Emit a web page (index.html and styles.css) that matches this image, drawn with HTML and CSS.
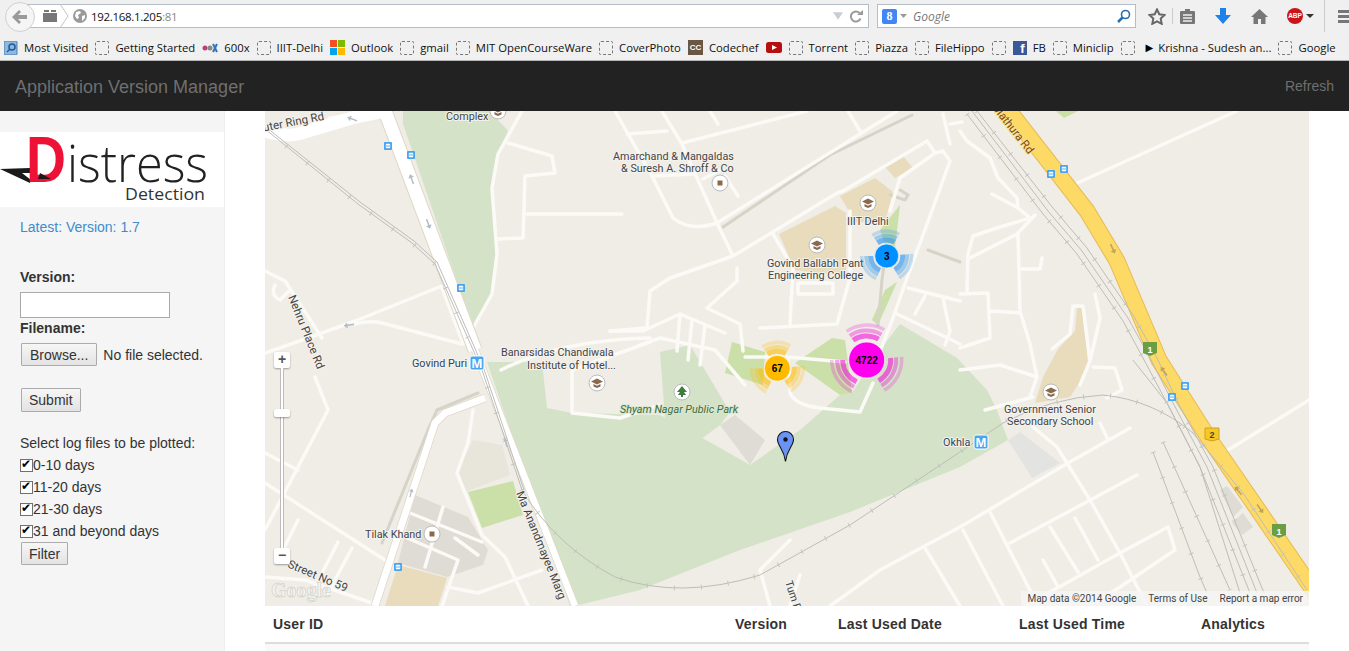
FILE: index.html
```html
<!DOCTYPE html>
<html lang="en">
<head>
  <meta charset="UTF-8" />
  <title>Application Version Manager</title>
  <link rel="stylesheet" href="styles.css">
</head>
<body>
  <div class="chrome">
    <div class="toolbar">
      <div class="back">
        <svg width="16" height="14" viewBox="0 0 16 14"><path class="ic-grey" d="M7 0l2 2-3 3h9v4H6l3 3-2 2-7-7z"/></svg>
      </div>
      <div class="urlbar">
        <svg class="tabs-ic" width="14" height="12" viewBox="0 0 14 12"><path class="ic-dark" d="M0 3h14v9H0zM1 0h5v2H1zM8 0h5v2H8z"/></svg>
        <svg class="chev" width="10" height="24" viewBox="0 0 10 24"><path class="ic-line" d="M1 0l8 12-8 12"/></svg>
        <svg class="globe" width="14" height="14" viewBox="0 0 14 14"><circle class="ic-grey" cx="7" cy="7" r="7"/><path class="ic-white" d="M3 3l4-1 1 2-3 2 1 3-2 1-2-3zM9 7l3-1 0 3-3 3z"/></svg>
        <span class="url">192.168.1.205<span class="port">:81</span></span>
        <svg class="drop" width="10" height="8" viewBox="0 0 12 9"><path class="ic-pale" d="M0 0h12L6 9z"/></svg>
        <svg class="reload" width="13" height="13" viewBox="0 0 13 13"><path class="ic-stroke" d="M10.500 8.500A5 5 0 1 1 9.500 3"/><path class="ic-grey" d="M7 5h6V0z"/></svg>
      </div>
      <div class="searchbar">
        <span class="g-ic">8</span>
        <svg class="caret" width="7" height="4" viewBox="0 0 7 4"><path class="ic-grey" d="M0 0h7L3.500 4z"/></svg>
        <span class="engine">Google</span>
        <svg class="mag" width="14" height="14" viewBox="0 0 14 14"><circle class="ic-blue-line" cx="8.500" cy="5.500" r="4"/><path class="ic-blue-line thick" d="M5.500 8.500L1 13"/></svg>
      </div>
      <div class="tool-icons">
        <svg width="18" height="17" viewBox="0 0 18 17"><path class="ic-star" d="M9 1.500l2.300 4.800 5.200.7-3.800 3.600 1 5.200L9 13.300l-4.700 2.500 1-5.200L1.500 7l5.200-.7z"/></svg>
        <i class="tool-sep"></i>
        <svg class="ic-clip" width="15" height="15" viewBox="0 0 15 15"><path class="ic-dark" d="M1 2h4V0h5v2h4q1 0 1 1v11q0 1-1 1H1q-1 0-1-1V3q0-1 1-1z"/><path class="ic-gap" d="M3 6h9M3 9h9M3 12h9"/></svg>
        <svg class="ic-down" width="16" height="16" viewBox="0 0 16 16"><path class="ic-blue" d="M5 0h6v7h5l-8 9-8-9h5z"/></svg>
        <svg class="ic-home" width="17" height="15" viewBox="0 0 17 15"><path class="ic-dark" d="M8.500 0L17 8h-2.500v7H10v-5H7v5H2.500V8H0z"/></svg>
        <span class="abp">ABP</span>
        <svg class="ic-abp-caret" width="8" height="4" viewBox="0 0 8 4"><path class="ic-near-black" d="M0 0h8L4 4z"/></svg>
        <i class="tool-sep tall"></i>
        <svg class="ic-menu" width="14" height="13" viewBox="0 0 14 13"><path class="ic-dark" d="M0 0h14v3H0zM0 5h14v3H0zM0 10h14v3H0z"/></svg>
      </div>
    </div>
    <div class="bookmarks">
      <a class="bm"><svg class="bm-ic" width="14" height="14" viewBox="0 0 14 14"><rect class="mv-bg" width="13" height="14" rx="1"/><circle class="mv-lens" cx="8" cy="6" r="3"/><path class="mv-lens" d="M6 8l-3 3"/></svg>Most Visited</a>
      <a class="bm"><i class="dash"></i>Getting Started</a>
      <a class="bm"><svg class="bm-ic" width="16" height="10" viewBox="0 0 16 10"><circle class="edx-a" cx="3" cy="5" r="2.500"/><circle class="edx-b" cx="8" cy="5" r="2.500"/><path class="edx-c" d="M11 1l4 8M15 1l-4 8"/></svg>600x</a>
      <a class="bm"><i class="dash"></i>IIIT-Delhi</a>
      <a class="bm"><span class="win"><i class="w1"></i><i class="w2"></i><i class="w3"></i><i class="w4"></i></span>Outlook</a>
      <a class="bm"><i class="dash"></i>gmail</a>
      <a class="bm"><i class="dash"></i>MIT OpenCourseWare</a>
      <a class="bm"><i class="dash"></i>CoverPhoto</a>
      <a class="bm"><span class="cc">CC</span>Codechef</a>
      <a class="bm"><svg class="bm-ic" width="16" height="11" viewBox="0 0 16 11"><rect class="yt" width="16" height="11" rx="2.500"/><path class="ic-white" d="M6 3l5 2.500L6 8z"/></svg></a>
      <a class="bm"><i class="dash"></i>Torrent</a>
      <a class="bm"><i class="dash"></i>Piazza</a>
      <a class="bm"><i class="dash"></i>FileHippo</a>
      <a class="bm"><i class="dash"></i></a>
      <a class="bm"><span class="fb">f</span>FB</a>
      <a class="bm"><i class="dash"></i>Miniclip</a>
      <a class="bm"><i class="dash"></i><span class="play">▶</span>Krishna - Sudesh an...</a>
      <a class="bm"><i class="dash"></i>Google</a>
    </div>
  </div>

  <nav class="navbar">
    <span class="brand">Application Version Manager</span>
    <a class="refresh">Refresh</a>
  </nav>

  <div class="page">
    <aside class="sidebar">
      <div class="logo">
        <svg width="224" height="75" viewBox="0 0 224 75">
          <path class="logo-wing" d="M0 37l30-1 0 5-8 0 9 7-1 3z"/>
          <text class="logo-d" x="26" y="50" textLength="40" lengthAdjust="spacingAndGlyphs">D</text>
          <path class="logo-notch" d="M40 41l11 6-13 0z"/>
          <text class="logo-word" x="67" y="50" textLength="141" lengthAdjust="spacingAndGlyphs">istress</text>
          <text class="logo-sub" x="125" y="68" textLength="80" lengthAdjust="spacingAndGlyphs">Detection</text>
        </svg>
      </div>
      <p class="latest">Latest: Version: 1.7</p>
      <form class="upload">
        <label class="lbl lbl-version">Version:</label>
        <input class="text-in" type="text">
        <label class="lbl">Filename:</label>
        <div class="file-row">
          <button type="button" class="btn btn-browse">Browse...</button>
          <span>No file selected.</span>
        </div>
        <button type="button" class="btn btn-submit">Submit</button>
      </form>
      <div class="filters">
        <p class="filters-title">Select log files to be plotted:</p>
        <label class="chk"><input type="checkbox" checked>0-10 days</label>
        <label class="chk"><input type="checkbox" checked>11-20 days</label>
        <label class="chk"><input type="checkbox" checked>21-30 days</label>
        <label class="chk"><input type="checkbox" checked>31 and beyond days</label>
        <button type="button" class="btn btn-filter">Filter</button>
      </div>
    </aside>

    <main class="content">
      <div class="map">
        <svg class="map-svg" width="1044" height="495" viewBox="265 111 1044 495">
          <defs>
            <symbol id="school" viewBox="0 0 18 18">
              <circle class="poi-bg" cx="9" cy="9" r="8"/>
              <path class="poi-brown" d="M9 4.500L15 7.500 9 10.500 3 7.500zM5.500 10l3.500 1.700 3.500-1.700v2.500L9 14l-3.500-1.500z"/>
            </symbol>
            <symbol id="square" viewBox="0 0 18 18">
              <circle class="poi-bg" cx="9" cy="9" r="8"/>
              <rect class="poi-brown" x="6.500" y="6.500" width="5" height="5"/>
            </symbol>
            <symbol id="metro" viewBox="0 0 16 16">
              <rect class="metro-bg" x="1" y="1" width="14" height="14" rx="2"/>
              <text class="metro-m" x="8" y="13" text-anchor="middle">M</text>
            </symbol>
            <symbol id="bus" viewBox="0 0 9 9">
              <rect class="bus-bg" width="9" height="9" rx="1"/>
              <rect class="bus-in" x="2" y="2" width="5" height="5" rx="1"/>
              <rect class="bus-bg" x="2" y="4" width="5" height="1"/>
            </symbol>
            <symbol id="arrow" viewBox="0 0 8 14">
              <path d="M4 0l4 5H5v9H3V5H0z"/>
            </symbol>
          </defs>

          <rect class="land" x="265" y="111" width="1044" height="495"/>

          <!-- parks and areas -->
          <path class="park" d="M403 111L490 111 508 131 498 154 492 188 497 254 492 294 473 328 403 124z"/>
          <path class="park" d="M487 362L542 362 547 408 572 413 660 415 715 445 750 465 800 430 840 395 852 393 880 350 900 324 957 358 987 390 997 410 1008 440 960 467 850 512 740 550 640 590 575 606 570 606z"/>
          <path class="park" d="M660 352L690 345 730 412 720 425 700 440 665 418z"/>
          <path class="park-mid" d="M732 342L765 352 763 385 725 373z"/>
          <path class="park-mid" d="M795 363L832 338 845 340 852 393 840 395z"/>
          <path class="park-mid" d="M468 492L513 481 523 515 482 528z"/>
          <path class="park-mid" d="M880 230L900 205 895 248 885 245z"/>
          <path class="park-mid" d="M885 290L897 282 878 325 872 320z"/>
          <path class="park-mid" d="M1056 111L1078 111 1064 118z"/>
          <path class="bld" d="M720 425L735 415 765 440 750 465z"/>
          <path class="sand" d="M779 234L835 206 846 213 846 276 795 270z"/>
          <path class="sand" d="M840 196L875 178 893 192 885 222 855 222z"/>
          <path class="sand" d="M885 167L902 155 913 168 895 178z"/>
          <path class="sand" d="M1058 349L1075 331 1077 308 1082 308 1088 361 1083 377 1070 397 1035 403 1043 377z"/>
          <path class="sand" d="M398 565L447 578 438 606 385 606z"/>
          <path class="bld" d="M415 495L468 517 488 550 483 565 447 577 398 563z"/>
          <path class="bld-light" d="M473 440L502 445 510 475 465 492 457 473z"/>
          <path class="bld-grey" d="M1008 440L1020 432 1060 463 1032 478z"/>
          <path class="bld" d="M1220 490L1227 486 1243 507 1233 517z"/>
          <path class="bld" d="M1232 523L1243 513 1253 527 1242 535z"/>

          <!-- grey service roads -->
          <path class="r-grey" d="M478 393L437 410 428 430 382 543"/>
          <path class="r-grey" d="M723 227L830 155 912 115"/>
          <path class="r-grey" d="M878 325L882 280 886 250"/>
          <path class="r-grey" d="M928 250L960 262M900 190L908 195 905 200 890 195"/>

          <!-- minor roads -->
          <g class="r">
            <path d="M522 111L498 154 492 188 497 254 492 294 473 328"/>
            <path d="M508 143L552 156 555 173 525 176 523 238 497 239M527 214H622"/>
            <path d="M442 286L355 321 308 338 265 353M355 324Q370 320 382 323L462 344 468 343M442 288L462 341"/>
            <path d="M265 271L285 281 322 338M275 285Q270 295 280 300L290 290"/>
            <path d="M315 377L328 410 265 530M265 453L298 470M265 483L385 560M298 520L278 560M338 542L315 587M352 548L328 593M265 577L305 580 372 603"/>
            <path d="M473 410L468 443 457 473 482 535 505 557 522 593 528 606"/>
            <path d="M410 513L482 542M443 507L425 567M405 537L458 560 442 606M455 538L478 555M448 587L478 593 542 570"/>
            <path d="M615 111L653 178 673 218Q690 232 717 223L897 111M717 223L733 256M627 134L667 131M662 111L682 144 717 223M682 143L807 111M848 111L860 131M653 176L693 174M703 179L720 170M725 176L738 196M710 111L718 124"/>
            <path d="M610 331L647 328 650 291 670 278 733 256 837 193 843 191 927 141 935 153 900 178 890 211M935 153L943 151 950 161 933 208 907 278 893 318 880 351"/>
            <path d="M773 234L793 268 790 324M850 211L850 278 837 324 760 328M798 283H833V294H798zM737 268V281L707 308 740 324 743 351"/>
            <path d="M610 331L643 331 680 314 725 333M680 314L677 351M692 320L688 360M705 325L700 365M640 345L660 338 715 350 745 385"/>
            <path d="M745 357L788 357 845 362M788 357L790 393Q795 405 820 408L860 412 873 383M572 413V370L650 342M572 413L620 418 660 405"/>
            <path d="M501 370Q560 340 650 338"/>
            <path d="M908 288L960 301M897 314L960 344M925 296L915 314M943 298L950 331 945 345M943 114L950 144M950 124L962 122"/>
            <path d="M960 131L967 141 990 158 998 178 1017 198 1018 208 1030 218M992 194L1018 208M1035 215L1017 234 970 258M1030 218L997 228 973 236 968 254 967 291M960 294L988 293 990 338 960 348M990 311L1020 313M1018 234L1020 311 1030 344 1037 377M1022 269H1040L1042 258"/>
            <path d="M1052 349L1070 334 1073 306H1083L1090 361 1080 385M1095 294L1100 318 1090 361"/>
            <path d="M960 370L1000 365 1037 377 1030 397M1093 367L1115 368 1122 390 1107 398M985 410L1033 397"/>
            <path d="M960 527L1068 463 1130 428M1010 543L1137 475M1033 427L1057 447 1090 500 1120 553 1147 606M1100 423L1108 440M990 512L1038 606M963 530L1003 606M1050 527L1078 572M1075 518L1098 560M1043 560L1058 587M1027 605L1120 553 1168 527 1175 550 1120 587 1090 606M960 527L880 570 830 606M925 548L960 606"/>
            <path d="M1075 184L1237 111M1228 450L1309 400"/>
            <path d="M770 606L760 570 790 540M790 606L800 575"/>
            <path d="M385 111L330 118"/>
          </g>

          <!-- main white roads -->
          <path class="casing-w" d="M385 111L475 350"/>
          <path class="casing-n" d="M475 350L575 606"/>
          <path class="casing-t" d="M485 398L445 413 435 423 375 606"/>
          <path class="main-w" d="M265 131Q285 137 298 134L352 118 385 111"/>
          <path class="main-w" d="M385 111L475 350"/>
          <path class="main-n" d="M475 350L575 606"/>
          <path class="main-t" d="M485 398L445 413 435 423 375 606"/>

          <!-- Mathura Rd -->
          <path class="hwy-case" d="M1003 103L1087 211 1117 261 1159 360 1208 437 1320 600"/>
          <path class="hwy" d="M1003 103L1087 211 1117 261 1159 360 1208 437 1320 600"/>

          <!-- railways -->
          <g class="rail">
            <path d="M265 129L358 204 412 243 435 264 482 370 522 490"/>
            <path d="M267 128L360 202 414 241 437 262 484 369 524 490"/>
            <path d="M522 490Q555 545 615 577Q680 600 760 575L850 525 960 452 1003 423Q1050 398 1103 395 1153 400 1193 433L1243 493 1307 590"/>
            <path d="M967 114L1043 214 1077 254 1123 321 1143 358 1167 403 1200 467 1250 593"/>
            <path d="M972 111L1048 211 1082 251 1128 318 1150 358 1173 403 1207 467 1257 593"/>
            <path d="M977 111L1053 208 1087 248 1133 315 1157 358 1178 403 1213 467 1264 593"/>
            <path d="M1133 360L1167 403 1200 467 1240 593"/>
            <path d="M1153 452L1200 577 1207 593M1163 442L1230 590"/>
          </g>
          <g class="rail-ticks">
            <path d="M265 129L358 204 412 243 435 264 482 370 522 490"/>
            <path d="M522 490Q555 545 615 577Q680 600 760 575L850 525 960 452 1003 423Q1050 398 1103 395 1153 400 1193 433L1243 493 1307 590"/>
            <path d="M967 114L1043 214 1077 254 1123 321 1143 358 1167 403 1200 467 1250 593"/>
            <path d="M977 111L1053 208 1087 248 1133 315 1157 358 1178 403 1213 467 1264 593"/>
            <path d="M1153 452L1200 577 1207 593M1163 442L1230 590"/>
          </g>

          <!-- road direction arrows -->
          <use class="arr" href="#arrow" x="0" y="0" width="6" height="11" transform="translate(407 175) rotate(-20)"/>
          <use class="arr" href="#arrow" x="0" y="0" width="6" height="11" transform="translate(433 228) rotate(160)"/>
          <use class="arr" href="#arrow" x="0" y="0" width="6" height="11" transform="translate(402 112) rotate(185)"/>
          <use class="arr" href="#arrow" x="0" y="0" width="6" height="11" transform="translate(346 120) rotate(-70)"/>
          <use class="arr" href="#arrow" x="0" y="0" width="6" height="11" transform="translate(344 329) rotate(-100)"/>
          <use class="arr" href="#arrow" x="0" y="0" width="5" height="11" transform="translate(410 487) rotate(15)"/>
          <use class="arr" href="#arrow" x="0" y="0" width="5" height="11" transform="translate(502 438) rotate(-15)"/>
          <use class="arr-y" href="#arrow" x="0" y="0" width="6" height="12" transform="translate(1118 253) rotate(155)"/>
          <use class="arr-y" href="#arrow" x="0" y="0" width="6" height="12" transform="translate(1158 368) rotate(-35)"/>
          <use class="arr-y" href="#arrow" x="0" y="0" width="6" height="12" transform="translate(1232 488) rotate(-40)"/>
          <use class="arr-y" href="#arrow" x="0" y="0" width="6" height="12" transform="translate(1266 512) rotate(145)"/>

          <!-- poi icons -->
          <use href="#school" x="489" y="102" width="18" height="18"/>
          <use href="#square" x="711" y="174" width="18" height="18"/>
          <use href="#school" x="859" y="194" width="18" height="18"/>
          <use href="#school" x="808" y="236" width="18" height="18"/>
          <use href="#school" x="588" y="374" width="18" height="18"/>
          <use href="#square" x="423" y="525" width="18" height="18"/>
          <use href="#school" x="1042" y="383" width="18" height="18"/>
          <circle class="poi-bg" cx="682" cy="392" r="8"/>
          <path class="tree" d="M682 386l5 6h-3l2 3h-8l2-3h-3zM681 395h2v2h-2z"/>
          <use href="#metro" x="469" y="355" width="16" height="16"/>
          <use href="#metro" x="973" y="434" width="16" height="16"/>
          <use href="#bus" x="384" y="142" width="8" height="8"/>
          <use href="#bus" x="407" y="151" width="8" height="8"/>
          <use href="#bus" x="457" y="284" width="8" height="8"/>
          <use href="#bus" x="394" y="563" width="8" height="8"/>
          <use href="#bus" x="1047" y="170" width="8" height="8"/>
          <use href="#bus" x="1060" y="165" width="8" height="8"/>
          <use href="#bus" x="1168" y="393" width="8" height="8"/>
          <use href="#bus" x="1181" y="382" width="8" height="8"/>

          <!-- shields -->
          <path class="shield-g" d="M1143 342H1157V353L1150 356 1143 353z"/>
          <text class="shield-t" x="1150" y="353">1</text>
          <path class="shield-g" d="M1272 524H1286V535L1279 538 1272 535z"/>
          <text class="shield-t" x="1279" y="535">1</text>
          <path class="shield-y" d="M1205 428H1219V439L1212 441 1205 439z"/>
          <text class="shield-t dark" x="1212" y="438">2</text>

          <!-- labels -->
          <g class="lab">
            <text x="446" y="120">Complex</text>
            <text x="613" y="160">Amarchand &amp; Mangaldas</text>
            <text x="621" y="172">&amp; Suresh A. Shroff &amp; Co</text>
            <text x="847" y="225">IIIT Delhi</text>
            <text x="767" y="267">Govind Ballabh Pant</text>
            <text x="768" y="279">Engineering College</text>
            <text x="501" y="356">Banarsidas Chandiwala</text>
            <text x="527" y="369">Institute of Hotel...</text>
            <text class="lab-metro" x="412" y="367">Govind Puri</text>
            <text x="365" y="538">Tilak Khand</text>
            <text class="lab-metro" x="943" y="446">Okhla</text>
            <text x="1004" y="413">Government Senior</text>
            <text x="1007" y="425">Secondary School</text>
            <text class="lab-road" transform="translate(256 133) rotate(-11)">Outer Ring Rd</text>
            <text class="lab-road" transform="translate(288 297) rotate(68)">Nehru Place Rd</text>
            <text class="lab-road" transform="translate(287 567) rotate(23)">Street No 59</text>
            <text class="lab-road" transform="translate(516 493) rotate(68)">Ma Anandmayee Marg</text>
            <text transform="translate(785 582) rotate(72)">Tum P</text>
            <text class="lab-park" x="620" y="413">Shyam Nagar Public Park</text>
            <text class="lab-hwy" transform="translate(992 108) rotate(52)">Mathura Rd</text>
          </g>
          <text class="gmark" x="271" y="597">Google</text>

          <!-- clusters -->
          <g class="cluster c-yellow">
            <circle class="a1" cx="777.300" cy="368.300" r="17" pathLength="360"/>
            <circle class="a2" cx="777.300" cy="368.300" r="21.500" pathLength="360"/>
            <circle class="a3" cx="777.300" cy="368.300" r="26" pathLength="360"/>
            <circle class="core" cx="777.300" cy="368.300" r="13"/>
            <text x="777.300" y="372">67</text>
          </g>
          <g class="cluster c-pink">
            <circle class="a1" cx="866.700" cy="360" r="24" pathLength="360"/>
            <circle class="a2" cx="866.700" cy="360" r="29.500" pathLength="360"/>
            <circle class="a3" cx="866.700" cy="360" r="35" pathLength="360"/>
            <circle class="core" cx="866.700" cy="360" r="18"/>
            <text x="866.700" y="364">4722</text>
          </g>
          <g class="cluster c-blue">
            <circle class="a1" cx="886.700" cy="256" r="16" pathLength="360"/>
            <circle class="a2" cx="886.700" cy="256" r="20.500" pathLength="360"/>
            <circle class="a3" cx="886.700" cy="256" r="25" pathLength="360"/>
            <circle class="core" cx="886.700" cy="256" r="12"/>
            <text x="886.700" y="260">3</text>
          </g>

          <!-- pin -->
          <path class="pin" d="M785.500 431.500C781 431.500 777.500 435 777.500 439.500 777.500 446 784 449 785.500 461.500 787 449 793.500 446 793.500 439.500 793.500 435 790 431.500 785.500 431.500z"/>
          <circle class="pin-dot" cx="785.500" cy="439.500" r="2.200"/>
        </svg>

        <div class="zoom-ctl">
          <span class="zoom-btn">+</span>
          <span class="zoom-track"><i class="zoom-thumb"></i></span>
          <span class="zoom-btn">−</span>
        </div>
        <div class="attrib">
          <span>Map data ©2014 Google</span>
          <span>Terms of Use</span>
          <span>Report a map error</span>
        </div>
      </div>

      <table class="users">
        <colgroup>
          <col class="c1"><col class="c2"><col class="c3"><col class="c4"><col class="c5">
        </colgroup>
        <thead>
          <tr><th>User ID</th><th>Version</th><th>Last Used Date</th><th>Last Used Time</th><th>Analytics</th></tr>
        </thead>
        <tbody>
          <tr><td colspan="5"></td></tr>
        </tbody>
      </table>
    </main>
  </div>
</body>
</html>
```
FILE: styles.css
```css
* { box-sizing: border-box; }
html, body { margin: 0; height: 100%; overflow: hidden; }
body {
  display: flex;
  flex-direction: column;
  font-family: "Liberation Sans", sans-serif;
  font-size: 14px;
  color: #333;
  background: #fff;
}
p { margin: 0; }

/* browser chrome */
.chrome { height: 61px; flex: none; background: #f0f0f0; border-bottom: 1px solid #b5b5b5; font-family: "Open Sans", sans-serif; }
.toolbar { height: 35px; display: flex; align-items: flex-start; padding: 4px 0 0 5px; position: relative; }
.back {
  position: absolute; left: 5px; top: 2px; z-index: 1;
  width: 30px; height: 30px; border-radius: 50%;
  background: #f5f5f5; border: 1px solid #d0d0d0;
  display: flex; align-items: center; justify-content: center;
}
.urlbar {
  margin-left: 14px; width: 850px; height: 24px;
  background: #fff; border: 1px solid #b4bec9;
  display: flex; align-items: center; padding-left: 22px;
}
.tabs-ic { margin-left: 1px; }
.chev { margin-left: 2px; }
.globe { margin-left: 4px; }
.url { margin-left: 4px; font-size: 11.500px; color: #111; letter-spacing: -.3px; }
.port { color: #888; }
.drop { margin-left: auto; }
.reload { margin: 0 5px 0 7px; }
.searchbar {
  margin-left: 8px; width: 259px; height: 24px;
  background: #fff; border: 1px solid #b4bec9;
  display: flex; align-items: center; padding-left: 4px;
}
.g-ic {
  width: 15px; height: 15px; border-radius: 2px; background: #4285f4;
  color: #fff; font: bold 12px/15px "Liberation Serif", serif; text-align: center;
}
.caret { margin-left: 3px; }
.engine { margin-left: 6px; font-size: 12px; font-style: italic; color: #777; }
.mag { margin-left: auto; margin-right: 4px; }
.tool-icons { position: absolute; left: 1148px; top: 0; height: 32px; display: flex; align-items: center; }
.tool-sep { width: 1px; height: 16px; margin-left: 6px; background: #ccc; }
.tool-sep.tall { height: 32px; margin-left: 10px; }
.ic-clip { margin-left: 7px; }
.ic-down { margin-left: 20px; }
.ic-home { margin-left: 20px; }
.abp {
  margin-left: 19px; width: 16px; height: 16px; border-radius: 50%;
  background: #c8141c; color: #fff; font: bold 6.500px/16px "Liberation Sans", sans-serif; text-align: center;
}
.ic-abp-caret { margin-left: 3px; }
.ic-menu { margin-left: 13px; }
.ic-grey { fill: #9a9a9a; }
.ic-dark { fill: #777; }
.ic-near-black { fill: #333; }
.ic-white { fill: #fff; }
.ic-pale { fill: #c9ced4; }
.ic-blue { fill: #1e82e8; }
.ic-gap { stroke: #f0f0f0; stroke-width: 1.500; fill: none; }
.ic-line { stroke: #c4c4c4; fill: none; }
.ic-stroke { stroke: #9a9a9a; stroke-width: 2; fill: none; }
.ic-star { fill: none; stroke: #666; stroke-width: 2; }
.ic-blue-line { fill: none; stroke: #2a6eb0; stroke-width: 1.600; }
.ic-blue-line.thick { stroke-width: 2.500; }

.bookmarks {
  height: 25px; display: flex; align-items: center; gap: 7px; padding: 0 0 0 4px;
  font-size: 11.300px; color: #111; white-space: nowrap;
}
.bm { display: flex; align-items: center; gap: 6px; }
.bm-ic { flex: none; }
.dash { width: 14px; height: 14px; border: 1px dashed #777; border-radius: 2px; flex: none; }
.mv-bg { fill: #8db8e0; stroke: #4c7fb0; }
.mv-lens { fill: none; stroke: #235b94; stroke-width: 1.500; }
.edx-a { fill: #b3447a; }
.edx-b { fill: #888; }
.edx-c { stroke: #2f74c0; stroke-width: 2; fill: none; }
.win { width: 15px; height: 15px; display: grid; grid-template-columns: 1fr 1fr; gap: 1px; }
.win .w1 { background: #f25022; }
.win .w2 { background: #7fba00; }
.win .w3 { background: #00a4ef; }
.win .w4 { background: #ffb900; }
.cc { width: 15px; height: 15px; background: #6b5644; color: #fff; font: bold 8px/15px "Liberation Sans", sans-serif; text-align: center; }
.yt { fill: #b5100f; }
.fb { width: 14px; height: 14px; background: #3b5998; color: #fff; font: bold 13px/15px "Liberation Sans", sans-serif; text-align: right; padding-right: 2px; }
.play { color: #000; font-size: 10px; margin: 0 -1px 0 5px; font-family: "DejaVu Sans", sans-serif; }

/* navbar */
.navbar {
  height: 50px; flex: none; background: #222;
  display: flex; align-items: center; justify-content: space-between;
  padding: 0 15px;
  color: #6f6f6f;
}
.brand { font-size: 18px; padding-top: 2px; }
.refresh { font-size: 14px; }

/* page */
.page { flex: 1; display: flex; min-height: 0; }
.sidebar {
  width: 225px; flex: none;
  background: #f5f5f5; border-right: 1px solid #eee;
  padding-top: 21px;
}
.logo { height: 75px; background: #fff; }
.logo svg { display: block; overflow: visible; }
.logo-wing { fill: #1a1a1a; }
.logo-d { font: bold 64px "Liberation Sans", sans-serif; fill: #ee1236; }
.logo-notch { fill: #1a1a1a; }
.logo-word { font: 300 52px "Open Sans", sans-serif; fill: #222; }
.logo-sub { font: 400 17px "Open Sans", sans-serif; fill: #333; }

.latest { margin: 12px 0 0 20px; color: #428bca; line-height: 16px; }
.upload { padding-left: 20px; }
.lbl { display: block; font-weight: bold; line-height: 20px; }
.lbl-version { margin-top: 32px; }
.text-in {
  display: block; width: 150px; height: 26px; margin-top: 5px;
  background: #fff; border: 1px solid #a9a9a9;
}
.file-row { display: flex; align-items: center; gap: 6px; margin-top: 5px; padding-left: 1px; }
.btn {
  height: 23px; padding: 0 7px;
  font: 14px "Liberation Sans", sans-serif; color: #333;
  background: linear-gradient(#f6f6f6, #e3e3e3);
  border: 1px solid #ababab; border-radius: 1px;
}
.btn-browse { padding: 0 8px; }
.btn-submit { display: block; height: 24px; margin: 22px 0 0 1px; }
.filters { padding-left: 20px; margin-top: 21px; }
.filters-title { line-height: 21px; }
.chk { display: flex; align-items: center; height: 22px; }
.chk input {
  appearance: none; -webkit-appearance: none;
  width: 13px; height: 13px; margin: 0; position: relative;
  background: #fff; border: 1px solid #707070;
}
.chk input::after {
  content: "✔"; position: absolute; left: 0; top: -3px;
  font: 12px/14px "DejaVu Sans", sans-serif; color: #000;
}
.btn-filter { display: block; margin: 0 0 0 1px; }

.content { flex: 1; padding: 0 40px; min-width: 0; }
.map { position: relative; height: 495px; overflow: hidden; }
.map-svg { display: block; }

/* map drawing */
.land { fill: #efede5; }
.park { fill: #d4e3c8; }
.park-mid { fill: #cbdfa9; }
.bld { fill: #dfdbd5; }
.bld-light { fill: #e8e5da; }
.bld-grey { fill: #e3e3e2; }
.sand { fill: #e8dcbd; }
.r path { fill: none; stroke: #fbfaf7; stroke-width: 3.500; stroke-linecap: round; stroke-linejoin: round; }
.r-grey { fill: none; stroke: #d6d3c8; stroke-width: 3; stroke-linecap: round; }
.casing-w, .casing-n, .casing-t { fill: none; stroke: #dfd8c8; }
.casing-w { stroke-width: 15; }
.casing-n { stroke-width: 8; }
.casing-t { stroke-width: 8.500; }
.main-w { fill: none; stroke: #fff; stroke-width: 13; }
.main-n { fill: none; stroke: #fff; stroke-width: 6.500; }
.main-t { fill: none; stroke: #fff; stroke-width: 7; stroke-linejoin: round; }
.hwy-case { fill: none; stroke: #e6ba55; stroke-width: 17; stroke-linejoin: round; }
.hwy { fill: none; stroke: #fdd966; stroke-width: 15; stroke-linejoin: round; }
.rail path { fill: none; stroke: #bdbdb9; stroke-width: 1; }
.rail-ticks path { fill: none; stroke: #c4c4c0; stroke-width: 5; stroke-dasharray: 1 26; }
.arr { fill: #b4bcc4; }
.arr-y { fill: #bfa35c; }
.poi-bg { fill: #fff; stroke: #bbb; stroke-width: 1; }
.poi-brown { fill: #8a6a4c; }
.tree { fill: #3f7d3f; }
.metro-bg { fill: #4aa5f0; stroke: #fff; stroke-width: 1; }
.metro-m { font: bold 13px "Liberation Sans", sans-serif; fill: #fff; }
.bus-bg { fill: #4aa5f0; }
.bus-in { fill: #fff; }
.shield-g { fill: #6a9e44; }
.shield-y { fill: #f7c820; stroke: #c9a22c; }
.shield-t { font: bold 9px "Liberation Sans", sans-serif; fill: #fff; text-anchor: middle; }
.shield-t.dark { fill: #444; }
.lab text {
  font: 10.800px Roboto, sans-serif; fill: #444;
  paint-order: stroke; stroke: #f5f3ee; stroke-width: 2px; stroke-linejoin: round;
}
.lab .lab-road { font-size: 11.500px; }
.lab .lab-metro { fill: #2a4560; }
.lab .lab-park { fill: #3f6b3f; font-style: italic; stroke: #d9e7ce; }
.lab .lab-hwy { fill: #7a4a10; font-size: 11.500px; stroke: #fde08a; }
.gmark { font: bold 20px "Liberation Serif", serif; fill: #f4f2ec; stroke: #c9c9c4; stroke-width: .5px; }

.cluster circle { fill: none; }
.cluster .a1, .cluster .a2, .cluster .a3 { stroke-dasharray: 65 55; transform-box: fill-box; transform-origin: center; transform: rotate(-5deg); }
.cluster .a1 { stroke-width: 5; stroke-opacity: .6; }
.cluster .a2 { stroke-width: 4; stroke-opacity: .38; }
.cluster .a3 { stroke-width: 3.500; stroke-opacity: .24; }
.cluster text { font: bold 10px "Liberation Sans", sans-serif; fill: #000; text-anchor: middle; }
.cluster .core { stroke: #fff; stroke-opacity: .7; stroke-width: 1; }
.c-yellow .core { fill: #ffba00; }
.c-yellow .a1, .c-yellow .a2, .c-yellow .a3 { stroke: #ffba00; }
.c-pink .core { fill: #ff00ee; }
.c-pink .a1, .c-pink .a2, .c-pink .a3 { stroke: #f010d8; }
.c-blue .core { fill: #0090ff; }
.c-blue .a1, .c-blue .a2, .c-blue .a3 { stroke: #2090f0; }
.pin { fill: #6b93f5; stroke: #10131c; stroke-width: 1.100; }
.pin-dot { fill: #10131c; }

/* map overlays */
.zoom-ctl {
  position: absolute; left: 9px; top: 241px; width: 16px; height: 212px;
  display: flex; flex-direction: column; align-items: center;
}
.zoom-btn {
  width: 16px; height: 16px; flex: none; background: #fff; border-radius: 2px;
  box-shadow: 0 1px 2px rgba(0,0,0,.35);
  font: bold 14px/15px "Liberation Sans", sans-serif; color: #555; text-align: center;
}
.zoom-track { flex: 1; width: 4px; position: relative; background: #fff; border-left: 1px solid #bbb; border-right: 1px solid #bbb; }
.zoom-thumb {
  position: absolute; left: -7px; top: 41px; width: 16px; height: 8px;
  background: #fff; border-radius: 2px; box-shadow: 0 1px 2px rgba(0,0,0,.35);
}
.attrib {
  position: absolute; right: 0; bottom: 0; height: 15px; padding: 0 6px;
  display: flex; align-items: center; gap: 12px;
  background: rgba(245,245,245,.8);
  font: 10px Roboto, sans-serif; color: #444;
}

/* table */
.users { width: 1044px; border-collapse: collapse; table-layout: fixed; }
.users .c1 { width: 462px; }
.users .c2 { width: 103px; }
.users .c3 { width: 181px; }
.users .c4 { width: 182px; }
.users th {
  height: 37px; padding: 0 8px; text-align: left;
  font-size: 14px; font-weight: bold; letter-spacing: .2px; color: #333;
  border-bottom: 2px solid #ddd;
}
.users td { height: 37px; background: #f9f9f9; }
```
